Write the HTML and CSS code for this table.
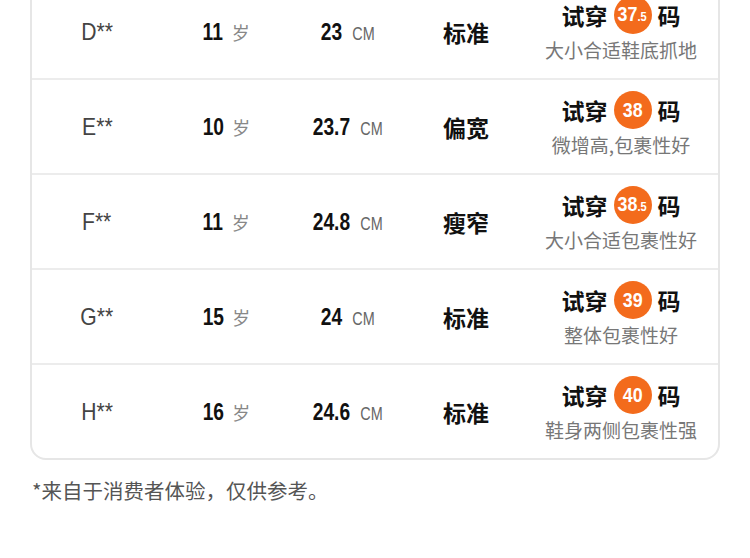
FILE: index.html
```html
<!DOCTYPE html>
<html lang="zh-CN">
<head>
    <meta charset="UTF-8">
    <meta name="viewport" content="width=device-width, initial-scale=1.0">
    <title>试穿尺码</title>
    <link rel="stylesheet" href="styles.css">
</head>
<body>
    <div class="card">
        <div class="row">
            <div class="name"><span class="narrow">D**</span></div>
            <div class="age"><span class="narrow">11</span><span class="unit">岁</span></div>
            <div class="len"><span class="narrow">23 <span class="cm">CM</span></span></div>
            <div class="fit">标准</div>
            <div class="try">
                <div class="try-line">试穿 <span class="badge"><span class="narrow">37<small>.5</small></span></span> 码</div>
                <div class="note">大小合适鞋底抓地</div>
            </div>
        </div>
        <div class="row">
            <div class="name"><span class="narrow">E**</span></div>
            <div class="age"><span class="narrow">10</span><span class="unit">岁</span></div>
            <div class="len"><span class="narrow">23.7 <span class="cm">CM</span></span></div>
            <div class="fit">偏宽</div>
            <div class="try">
                <div class="try-line">试穿 <span class="badge"><span class="narrow">38</span></span> 码</div>
                <div class="note">微增高,包裹性好</div>
            </div>
        </div>
        <div class="row">
            <div class="name"><span class="narrow">F**</span></div>
            <div class="age"><span class="narrow">11</span><span class="unit">岁</span></div>
            <div class="len"><span class="narrow">24.8 <span class="cm">CM</span></span></div>
            <div class="fit">瘦窄</div>
            <div class="try">
                <div class="try-line">试穿 <span class="badge"><span class="narrow">38<small>.5</small></span></span> 码</div>
                <div class="note">大小合适包裹性好</div>
            </div>
        </div>
        <div class="row">
            <div class="name"><span class="narrow">G**</span></div>
            <div class="age"><span class="narrow">15</span><span class="unit">岁</span></div>
            <div class="len"><span class="narrow">24 <span class="cm">CM</span></span></div>
            <div class="fit">标准</div>
            <div class="try">
                <div class="try-line">试穿 <span class="badge"><span class="narrow">39</span></span> 码</div>
                <div class="note">整体包裹性好</div>
            </div>
        </div>
        <div class="row">
            <div class="name"><span class="narrow">H**</span></div>
            <div class="age"><span class="narrow">16</span><span class="unit">岁</span></div>
            <div class="len"><span class="narrow">24.6 <span class="cm">CM</span></span></div>
            <div class="fit">标准</div>
            <div class="try">
                <div class="try-line">试穿 <span class="badge"><span class="narrow">40</span></span> 码</div>
                <div class="note">鞋身两侧包裹性强</div>
            </div>
        </div>
    </div>
    <p class="footnote">*来自于消费者体验，仅供参考。</p>
</body>
</html>
```

FILE: styles.css
```css
body {
    margin: 0;
    padding: 0;
    background: #fff;
    font-family: "Noto Sans CJK SC", "Noto Sans", sans-serif;
    color: #111;
}

.card {
    margin: -17px 30px 0;
    border: 2px solid #e6e6e6;
    border-radius: 16px;
    background: #fff;
}

.row {
    display: grid;
    grid-template-columns: 130px 126px 120px 116px 1fr;
    align-items: center;
    height: 95px;
    box-sizing: border-box;
    border-bottom: 2px solid #ececec;
}
.row:last-child {
    border-bottom: none;
    height: 93px;
}

.name, .age, .len, .fit {
    display: flex;
    justify-content: center;
    align-items: center;
    white-space: nowrap;
}

/* condensed look for latin digits */
.narrow {
    display: inline-block;
    font-family: "Liberation Sans", Arial, sans-serif;
    transform: scaleX(0.8);
    white-space: nowrap;
}

.name {
    font-size: 24px;
    font-weight: normal;
    color: #444;
}
.name .narrow {
    transform: scaleX(0.88);
}

.age, .len {
    font-size: 24px;
    font-weight: bold;
    color: #111;
}

.age .narrow {
    margin-right: -2px;
}

.unit {
    font-weight: normal;
    font-size: 18px;
    color: #888;
    margin-left: 8px;
}

.cm {
    font-weight: normal;
    font-size: 18px;
    color: #666;
    margin-left: 6px;
}

.fit {
    font-size: 23px;
    font-weight: bold;
    color: #111;
}

.try {
    text-align: center;
    padding-bottom: 4px;
}

.try-line {
    display: flex;
    justify-content: center;
    align-items: center;
    gap: 6px;
    font-size: 23px;
    font-weight: bold;
    line-height: 38px;
    color: #111;
}

.badge {
    display: inline-flex;
    justify-content: center;
    align-items: center;
    width: 38px;
    height: 38px;
    border-radius: 50%;
    background: #f36b1c;
    color: #fff;
    font-size: 21px;
    font-weight: bold;
}
.badge .narrow {
    transform: scaleX(0.85);
    line-height: 38px;
}
.badge small {
    font-size: 13px;
}

.note {
    margin-top: 3px;
    font-size: 19px;
    color: #777;
    line-height: 26px;
}

.footnote {
    margin: 16px 32px 0;
    font-size: 20.5px;
    line-height: 28px;
    color: #555;
}
```
